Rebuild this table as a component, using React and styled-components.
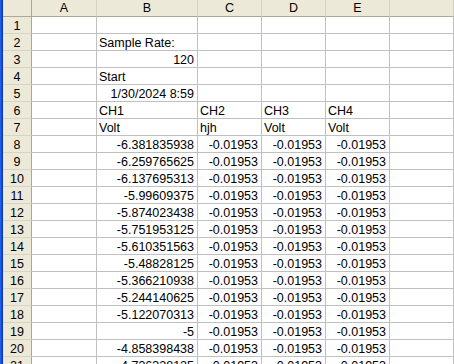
import React from "react";
import styled, { createGlobalStyle } from "styled-components";

const Global = createGlobalStyle`
  html, body { margin: 0; padding: 0; background: #fff; overflow: hidden; }
  body { font-family: "Liberation Sans", Arial, sans-serif; }
`;

const Frame = styled.div`
  display: flex;
  width: 454px;
  height: 364px;
  overflow: hidden;
`;

const Edge = styled.div`
  flex: 0 0 3px;
  background: linear-gradient(to right, #2a62e6 0, #1a56e8 1px, #0b3fc8 2px, #0a35b0 3px);
`;

const Sheet = styled.div`
  flex: 1;
  display: grid;
  grid-template-columns: 29px 65px 101px 64px 64px 64px 1fr;
  grid-auto-rows: 17px;
  align-content: start;
  font-size: 12.5px;
  color: #000;
`;

const Cell = styled.div`
  box-sizing: border-box;
  border-right: 1px solid #c0c0c0;
  border-bottom: 1px solid #c0c0c0;
  line-height: 16px;
  padding: 1px 2px 0 2px;
  white-space: nowrap;
  overflow: visible;
  text-align: ${(p) => (p.$right ? "right" : "left")};
  padding-right: ${(p) => (p.$right ? "3px" : "2px")};
`;

const ColHead = styled.div`
  box-sizing: border-box;
  background: #ece9d8;
  border-right: 1px solid #d8d4c4;
  border-bottom: 1px solid #aca899;
  line-height: 16px;
  text-align: center;
  color: #000;
`;

const Corner = styled(ColHead)`
  border-right: 1px solid #aca899;
`;

const RowHead = styled.div`
  box-sizing: border-box;
  background: #ece9d8;
  border-right: 1px solid #aca899;
  border-bottom: 1px solid #d8d4c4;
  line-height: 16px;
  padding-top: 1px;
  text-align: center;
`;

const cols = ["A", "B", "C", "D", "E", ""];

const bValues = [
  "-6.381835938",
  "-6.259765625",
  "-6.137695313",
  "-5.99609375",
  "-5.874023438",
  "-5.751953125",
  "-5.610351563",
  "-5.48828125",
  "-5.366210938",
  "-5.244140625",
  "-5.122070313",
  "-5",
  "-4.858398438",
  "-4.736328125",
];

const rows = [
  [{}, {}, {}, {}, {}],
  [{}, { t: "Sample Rate:" }, {}, {}, {}],
  [{}, { t: "120", r: true }, {}, {}, {}],
  [{}, { t: "Start" }, {}, {}, {}],
  [{}, { t: "1/30/2024 8:59", r: true }, {}, {}, {}],
  [{}, { t: "CH1" }, { t: "CH2" }, { t: "CH3" }, { t: "CH4" }],
  [{}, { t: "Volt" }, { t: "hjh" }, { t: "Volt" }, { t: "Volt" }],
  ...bValues.map((v) => [
    {},
    { t: v, r: true },
    { t: "-0.01953", r: true },
    { t: "-0.01953", r: true },
    { t: "-0.01953", r: true },
  ]),
];

export default function App() {
  return (
    <>
      <Global />
      <Frame>
        <Edge />
        <Sheet>
          <Corner />
          {cols.map((c, i) => (
            <ColHead key={i}>{c}</ColHead>
          ))}
          {rows.map((row, ri) => (
            <React.Fragment key={ri}>
              <RowHead>{ri + 1}</RowHead>
              {row.map((cell, ci) => (
                <Cell key={ci} $right={cell.r}>
                  {cell.t}
                </Cell>
              ))}
              <Cell />
            </React.Fragment>
          ))}
        </Sheet>
      </Frame>
    </>
  );
}
